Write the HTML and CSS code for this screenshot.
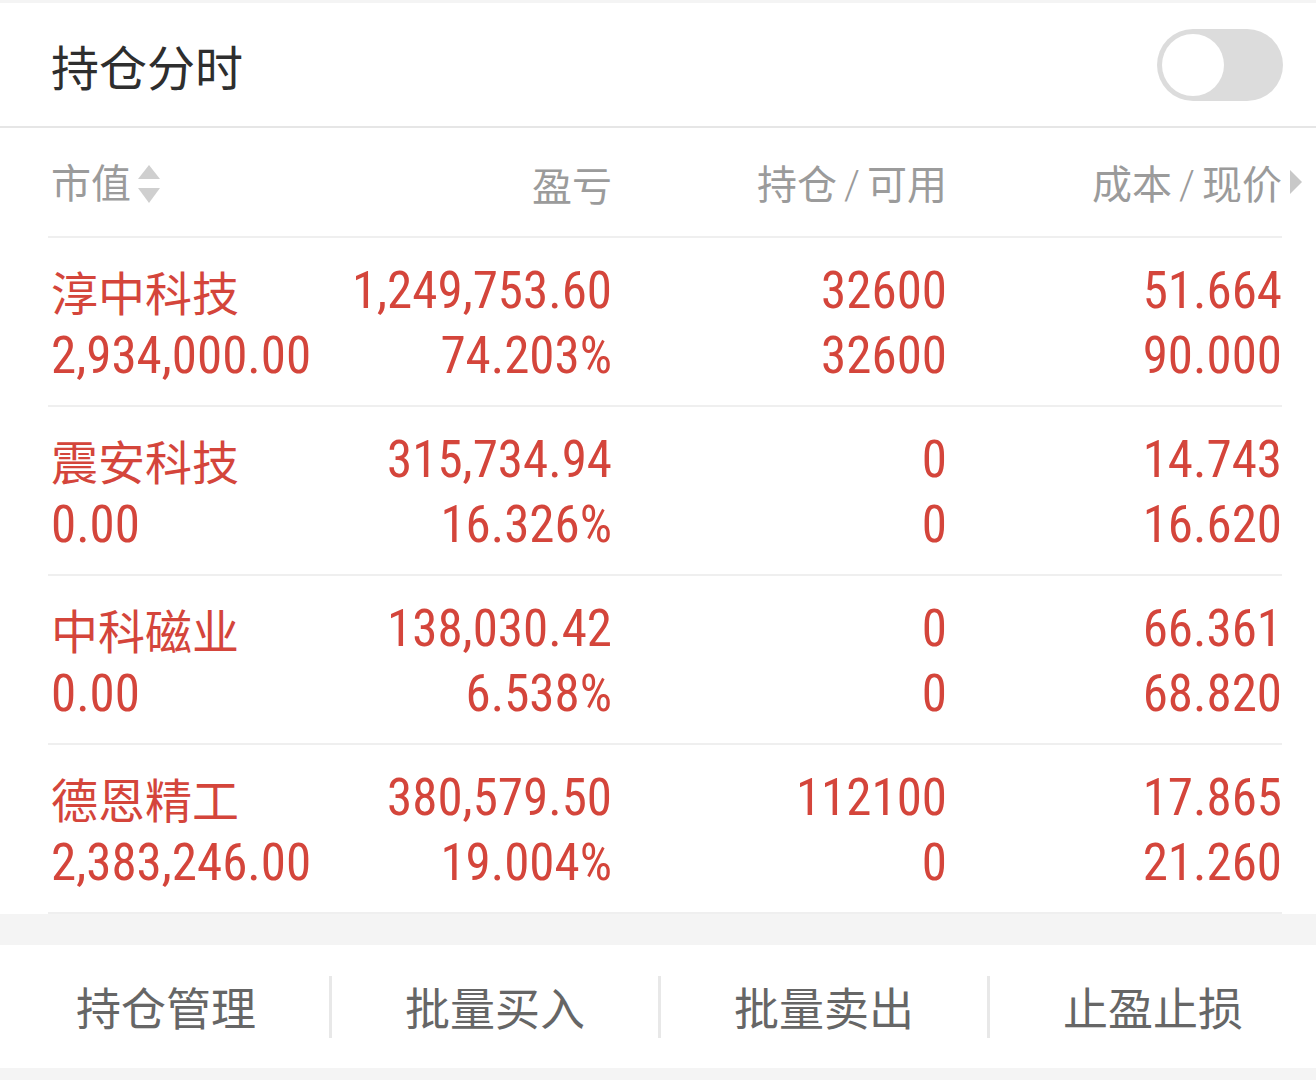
FILE: index.html
```html
<!DOCTYPE html>
<html lang="zh-CN">
<head>
<meta charset="utf-8">
<title>持仓分时</title>
<link rel="stylesheet" href="styles.css">
</head>
<body>
<div class="page">
  <header class="head">
    <h1 class="head-title">持仓分时</h1>
    <div class="toggle"><span class="toggle-knob"></span></div>
  </header>

  <section class="table">
    <div class="row row-head">
      <div class="cell cell-left th">市值<span class="sort"><span class="sort-up"></span><span class="sort-down"></span></span></div>
      <div class="cell th">盈亏</div>
      <div class="cell th">持仓<span class="slash">/</span>可用</div>
      <div class="cell th th-last">成本<span class="slash">/</span>现价<span class="more"></span></div>
    </div>

    <div class="row">
      <div class="cell cell-left"><div class="name">淳中科技</div><div class="num">2,934,000.00</div></div>
      <div class="cell"><div class="num">1,249,753.60</div><div class="num">74.203%</div></div>
      <div class="cell"><div class="num">32600</div><div class="num">32600</div></div>
      <div class="cell"><div class="num">51.664</div><div class="num">90.000</div></div>
    </div>

    <div class="row">
      <div class="cell cell-left"><div class="name">震安科技</div><div class="num">0.00</div></div>
      <div class="cell"><div class="num">315,734.94</div><div class="num">16.326%</div></div>
      <div class="cell"><div class="num">0</div><div class="num">0</div></div>
      <div class="cell"><div class="num">14.743</div><div class="num">16.620</div></div>
    </div>

    <div class="row">
      <div class="cell cell-left"><div class="name">中科磁业</div><div class="num">0.00</div></div>
      <div class="cell"><div class="num">138,030.42</div><div class="num">6.538%</div></div>
      <div class="cell"><div class="num">0</div><div class="num">0</div></div>
      <div class="cell"><div class="num">66.361</div><div class="num">68.820</div></div>
    </div>

    <div class="row">
      <div class="cell cell-left"><div class="name">德恩精工</div><div class="num">2,383,246.00</div></div>
      <div class="cell"><div class="num">380,579.50</div><div class="num">19.004%</div></div>
      <div class="cell"><div class="num">112100</div><div class="num">0</div></div>
      <div class="cell"><div class="num">17.865</div><div class="num">21.260</div></div>
    </div>
  </section>

  <nav class="actions">
    <div class="action">持仓管理</div>
    <div class="action">批量买入</div>
    <div class="action">批量卖出</div>
    <div class="action">止盈止损</div>
  </nav>
</div>
</body>
</html>
```

FILE: styles.css
```css
html, body {
  margin: 0;
  padding: 0;
}
body {
  background: #f4f4f4;
  font-family: "Noto Sans CJK SC", "Noto Sans", sans-serif;
}
.page {
  width: 1316px;
  padding-top: 3px;
}
.head {
  height: 123px;
  background: #fff;
  border-bottom: 2px solid #e6e6e6;
  display: flex;
  align-items: center;
  justify-content: space-between;
  padding: 0 33px 0 51px;
}
.head-title {
  margin: 0;
  font-size: 48px;
  font-weight: 400;
  color: #2e2e2e;
  line-height: 1;
}
.toggle {
  width: 126px;
  height: 72px;
  border-radius: 36px;
  background: #dcdcdc;
  display: flex;
  align-items: center;
  padding-left: 5px;
  box-sizing: border-box;
}
.toggle-knob {
  width: 62px;
  height: 62px;
  border-radius: 50%;
  background: #fff;
}
.table {
  background: #fff;
  padding: 0 34px 0 48px;
}
.row {
  display: grid;
  grid-template-columns: 262px 300px 335px 335px;
  border-bottom: 2px solid #efefef;
  padding: 20px 0 17px;
  height: 130px;
}
.row-head {
  padding: 0;
  height: 108px;
  align-items: center;
}
.cell {
  text-align: right;
  color: #d4453b;
  line-height: 65px;
  white-space: nowrap;
  margin-right: -2px;
}
.cell-left {
  text-align: left;
  padding-left: 3px;
  margin-right: 0;
}
.name {
  font-size: 47px;
  font-family: "Noto Sans CJK SC", sans-serif;
}
.num {
  font-family: "Liberation Sans Narrow", "Roboto Condensed", "DejaVu Sans Condensed", sans-serif;
  font-size: 51px;
}
.th {
  color: #9b9b9b;
  font-size: 40px;
  line-height: 1;
  position: relative;
  top: 2px;
}
.slash {
  font-family: "Roboto", sans-serif;
  font-weight: 300;
  margin: 0 7px;
}
.sort {
  position: relative;
  display: inline-block;
  width: 24px;
  height: 40px;
  vertical-align: middle;
  margin-left: 7px;
  top: -2px;
}
.sort-up, .sort-down {
  position: absolute;
  left: 0;
  width: 0;
  height: 0;
  border-left: 11px solid transparent;
  border-right: 11px solid transparent;
}
.sort-up {
  top: 0;
  border-bottom: 14px solid #cfcfcf;
}
.sort-down {
  top: 23px;
  border-top: 15px solid #cfcfcf;
}
.more {
  position: absolute;
  right: -20px;
  top: 50%;
  margin-top: -14px;
  width: 0;
  height: 0;
  border-top: 12px solid transparent;
  border-bottom: 12px solid transparent;
  border-left: 12px solid #c8c8c8;
}
.actions {
  margin-top: 31px;
  height: 123px;
  background: #fff;
  display: grid;
  grid-template-columns: repeat(4, 1fr);
  align-items: center;
}
.action {
  text-align: center;
  font-size: 45px;
  color: #666;
  line-height: 62px;
  border-left: 3px solid #e8e8e8;
}
.action:first-child {
  border-left-color: transparent;
}
```
